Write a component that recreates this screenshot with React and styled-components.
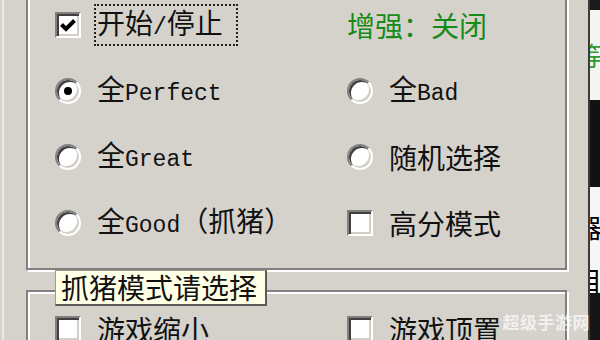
import styled, { createGlobalStyle, css } from "styled-components";

const GlobalStyle = createGlobalStyle`
  html, body {
    margin: 0;
    padding: 0;
    background: #d5d2cc;
  }
  body {
    width: 600px;
    height: 340px;
    overflow: hidden;
    font-family: "Noto Sans CJK SC", "Noto Sans", sans-serif;
  }
`;

const Screen = styled.div`
  position: relative;
  display: flex;
  width: 600px;
  height: 340px;
  overflow: hidden;
  background: #d5d2cc;
`;

const LeftRail = styled.div`
  flex: none;
  width: 22px;
  margin-left: 2px;
  border-left: 2px solid #eceae5;
`;

const Main = styled.div`
  flex: none;
  width: 543px;
  display: flex;
  flex-direction: column;
`;

const Gutter = styled.div`
  flex: none;
  width: 19px;
`;

const BackPane = styled.div`
  flex: none;
  width: 10px;
  border-left: 2px solid #3a3a3a;
  display: flex;
  flex-direction: column;
  overflow: hidden;
`;

const Piece = styled.div`
  flex: none;
  height: ${(p) => p.$h}px;
  background: ${(p) => p.$bg};
  color: ${(p) => p.$fg || "#000"};
  font-size: 26px;
  line-height: ${(p) => p.$h}px;
  white-space: nowrap;
  overflow: hidden;
  text-indent: -14px;
`;

const Group = styled.div`
  box-sizing: border-box;
  width: 541px;
  border: 2px solid #808080;
  box-shadow: inset 2px 2px 0 #fff, 2px 2px 0 #fff;
  display: grid;
  grid-template-columns: 292px 1fr;
  grid-auto-rows: 66px;
  align-items: center;
  padding: ${(p) => (p.$first ? "0 0 12px 27px" : "4px 0 0 27px")};
  margin-top: ${(p) => (p.$first ? "-10px" : "20px")};
`;

const Option = styled.div`
  display: flex;
  align-items: center;
  gap: 13px;
`;

const Check = styled.span`
  flex: none;
  box-sizing: border-box;
  width: 26px;
  height: 26px;
  background: #fff;
  border: 2px solid;
  border-color: #808080 #fff #fff #808080;
  box-shadow: inset 2px 2px 0 #404040, inset -2px -2px 0 #d4d0c8;
  display: flex;
  align-items: center;
  justify-content: center;
`;

const Radio = styled.span`
  flex: none;
  position: relative;
  box-sizing: border-box;
  width: 26px;
  height: 26px;
  border-radius: 50%;
  background: #fff;
  border: 2px solid;
  border-color: #808080 #fff #fff #808080;
  box-shadow: inset 2px 2px 0 #404040, inset -2px -2px 0 #d4d0c8;
  ${(p) =>
    p.$on &&
    css`
      &::after {
        content: "";
        position: absolute;
        left: 50%;
        top: 50%;
        width: 8px;
        height: 8px;
        margin: -4px 0 0 -4px;
        border-radius: 50%;
        background: #000;
      }
    `}
`;

const Label = styled.span`
  font-size: 28px;
  line-height: 32px;
  color: #111;
  white-space: nowrap;
  padding: 0 13px 0 1px;
  border: 2px ${(p) => (p.$focus ? "dotted #222" : "solid transparent")};
`;

const Mono = styled.span`
  font-family: "Liberation Mono", monospace;
  font-size: 23px;
`;

const Status = styled.span`
  font-size: 28px;
  line-height: 32px;
  color: #178a17;
  white-space: nowrap;
`;

const Tooltip = styled.div`
  position: absolute;
  left: 55px;
  top: 270px;
  box-sizing: border-box;
  width: 212px;
  height: 36px;
  padding-left: 5px;
  background: #ffffe6;
  border: 1px solid #9a9a90;
  border-right: 2px solid #5a5a5a;
  border-bottom: 2px solid #5a5a5a;
  font-size: 28px;
  line-height: 32px;
  color: #111;
  white-space: nowrap;
`;

const Watermark = styled.div`
  position: absolute;
  right: 10px;
  bottom: 6px;
  font-size: 17px;
  font-weight: 700;
  color: rgba(255, 255, 255, 0.7);
  letter-spacing: 0.5px;
`;

function Tick() {
  return (
    <svg width="18" height="18" viewBox="0 0 18 18">
      <path d="M2.5 8.5 L7 13 L15.5 4.5" fill="none" stroke="#000" strokeWidth="4" />
    </svg>
  );
}

function CheckOption({ checked, focus, children }) {
  return (
    <Option>
      <Check>{checked && <Tick />}</Check>
      <Label $focus={focus}>{children}</Label>
    </Option>
  );
}

function RadioOption({ on, children }) {
  return (
    <Option>
      <Radio $on={on} />
      <Label>{children}</Label>
    </Option>
  );
}

export default function App() {
  return (
    <>
      <GlobalStyle />
      <Screen>
        <LeftRail />
        <Main>
          <Group $first>
            <CheckOption checked focus>
              开始<Mono>/</Mono>停止
            </CheckOption>
            <Status>增强：关闭</Status>
            <RadioOption on>
              全<Mono>Perfect</Mono>
            </RadioOption>
            <RadioOption>
              全<Mono>Bad</Mono>
            </RadioOption>
            <RadioOption>
              全<Mono>Great</Mono>
            </RadioOption>
            <RadioOption>随机选择</RadioOption>
            <RadioOption>
              全<Mono>Good</Mono>（抓猪）
            </RadioOption>
            <CheckOption>高分模式</CheckOption>
          </Group>
          <Group>
            <CheckOption>游戏缩小</CheckOption>
            <CheckOption>游戏顶置</CheckOption>
          </Group>
        </Main>
        <Gutter />
        <BackPane>
          <Piece $h={10} $bg="#1a1a1a" />
          <Piece $h={90} $bg="#f4f4f0" $fg="#2e9a2e">等</Piece>
          <Piece $h={87} $bg="#121212" />
          <Piece $h={80} $bg="#f6f6f6">器</Piece>
          <Piece $h={26} $bg="#fafafa">目</Piece>
          <Piece $h={47} $bg="#161616" />
        </BackPane>
        <Tooltip>抓猪模式请选择</Tooltip>
        <Watermark>超级手游网</Watermark>
      </Screen>
    </>
  );
}
